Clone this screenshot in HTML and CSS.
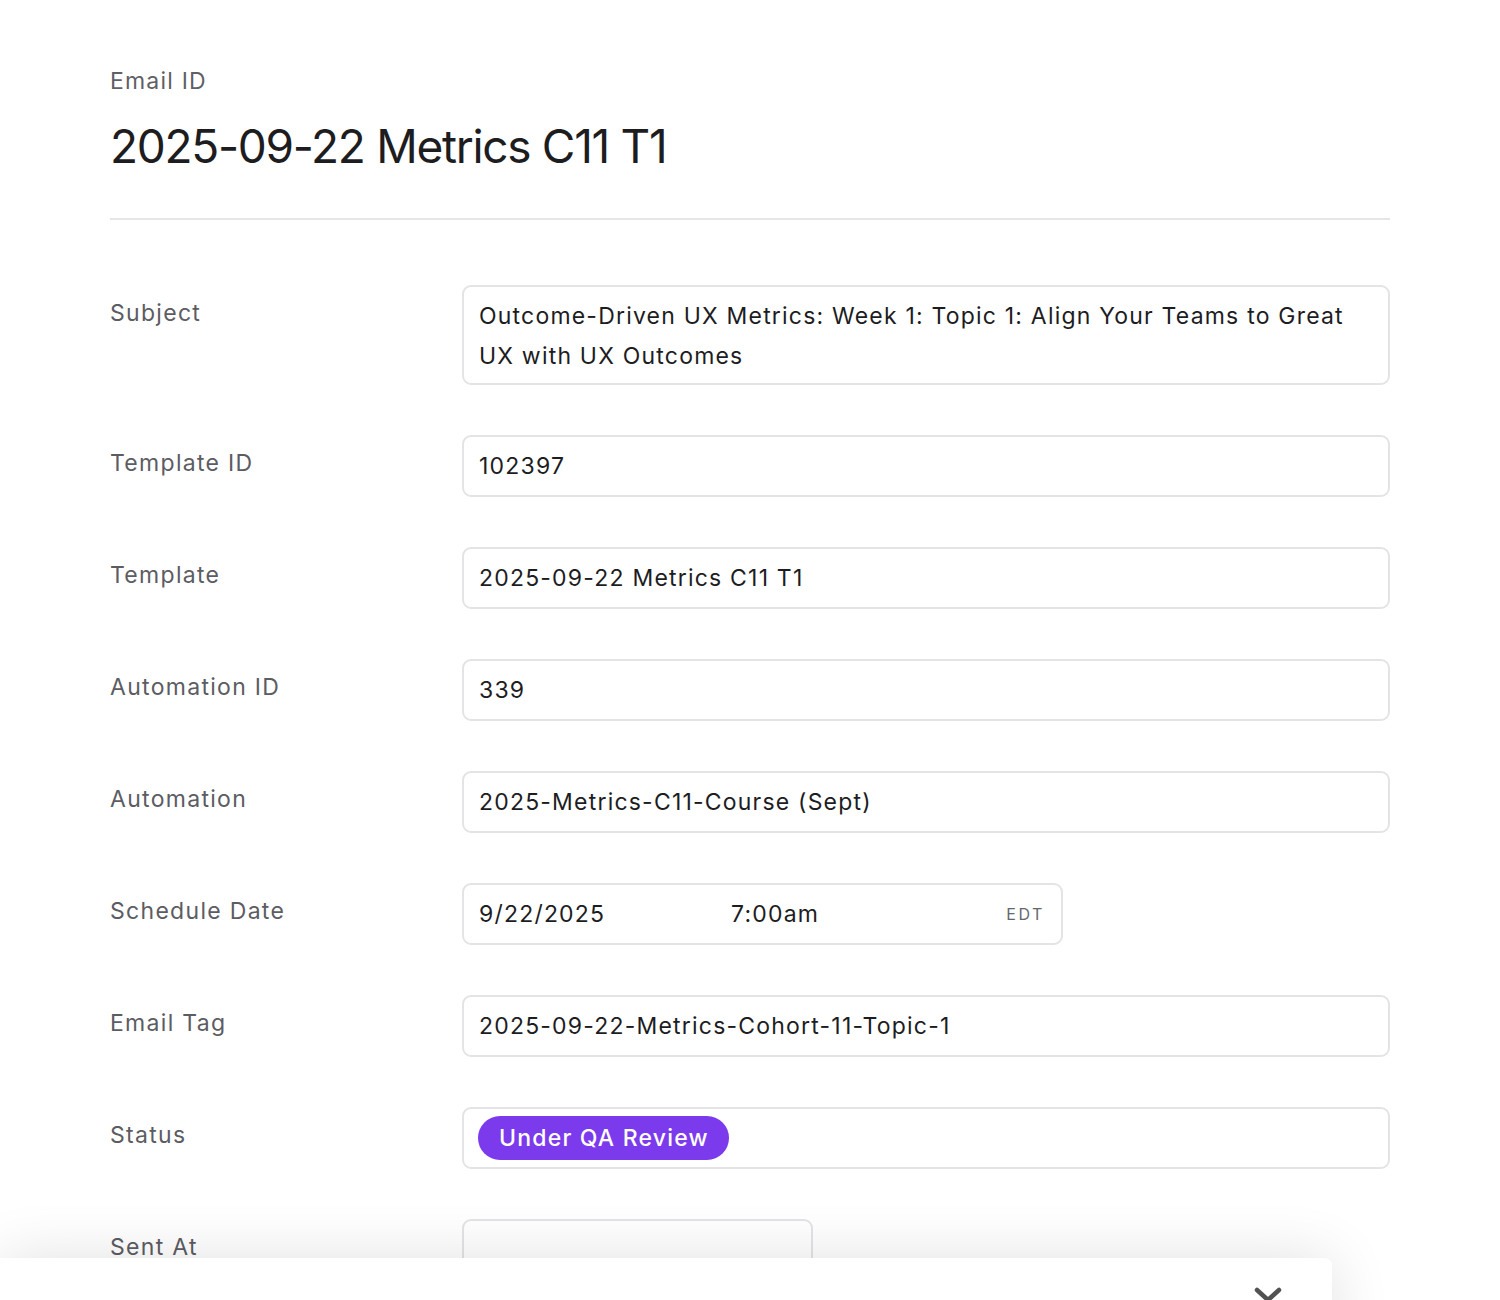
FILE: index.html
```html
<!DOCTYPE html>
<html>
<head>
<meta charset="utf-8">
<link rel="stylesheet" href="styles.css">
</head>
<body>
<main class="page">
  <header class="head">
    <div class="eyebrow">Email ID</div>
    <h1 class="title">2025-09-22 Metrics C11 T1</h1>
  </header>
  <section class="form">
    <div class="row">
      <div class="label">Subject</div>
      <div class="field multi">Outcome-Driven UX Metrics: Week 1: Topic 1: Align Your Teams to Great UX with UX Outcomes</div>
    </div>
    <div class="row">
      <div class="label">Template ID</div>
      <div class="field">102397</div>
    </div>
    <div class="row">
      <div class="label">Template</div>
      <div class="field">2025-09-22 Metrics C11 T1</div>
    </div>
    <div class="row">
      <div class="label">Automation ID</div>
      <div class="field">339</div>
    </div>
    <div class="row">
      <div class="label">Automation</div>
      <div class="field">2025-Metrics-C11-Course (Sept)</div>
    </div>
    <div class="row">
      <div class="label">Schedule Date</div>
      <div class="field date">
        <span class="d">9/22/2025</span>
        <span class="t">7:00am</span>
        <span class="tz">EDT</span>
      </div>
    </div>
    <div class="row">
      <div class="label">Email Tag</div>
      <div class="field">2025-09-22-Metrics-Cohort-11-Topic-1</div>
    </div>
    <div class="row">
      <div class="label">Status</div>
      <div class="field status"><span class="pill">Under QA Review</span></div>
    </div>
    <div class="row">
      <div class="label">Sent At</div>
      <div class="field sent"></div>
    </div>
  </section>
</main>
<div class="sheet">
  <svg class="chev" width="28" height="18" viewBox="0 0 28 18"><path d="M3 4 L14 14 L25 4" fill="none" stroke="#525252" stroke-width="4.5" stroke-linecap="round" stroke-linejoin="round"/></svg>
</div>
</body>
</html>
```
FILE: styles.css
```css
html, body {
  margin: 0;
  padding: 0;
  background: #ffffff;
  height: 1300px;
  overflow: hidden;
}
body {
  font-family: Inter, "Noto Sans", sans-serif;
  color: #1d1d1f;
}
.page {
  padding: 66px 110px 0 110px;
}
.head {
  border-bottom: 2px solid #e6e6e8;
  padding-bottom: 44px;
}
.eyebrow {
  font-size: 23px;
  line-height: 30px;
  letter-spacing: 1.2px;
  color: #5f5f66;
}
.title {
  margin: 22px 0 0 0;
  font-size: 46px;
  line-height: 56px;
  font-weight: 400;
  letter-spacing: -1.3px;
  color: #1d1d1f;
}
.form {
  padding-top: 65px;
  display: flex;
  flex-direction: column;
  gap: 50px;
}
.row {
  display: flex;
  align-items: flex-start;
}
.label {
  width: 352px;
  flex: none;
  font-size: 23px;
  line-height: 28px;
  letter-spacing: 1.3px;
  padding-top: 14px;
  color: #5c5c63;
}
.field {
  flex: 1;
  box-sizing: border-box;
  height: 62px;
  border: 2px solid #e4e4e6;
  border-radius: 9px;
  padding: 0 15px;
  display: flex;
  align-items: center;
  font-size: 23px;
  letter-spacing: 1.2px;
  color: #1d1d1f;
}
.field.multi {
  display: block;
  height: 100px;
  padding: 9px 15px;
  line-height: 40px;
}
.field.date {
  flex: none;
  width: 601px;
}
.date .d { width: 252px; }
.date .t { flex: 1; }
.date .tz {
  font-size: 16px;
  letter-spacing: 2.6px;
  color: #66666d;
  padding-right: 1px;
}
.field.status {
  padding: 0 14px;
}
.pill {
  background: #7c3aed;
  color: #ffffff;
  border-radius: 22px;
  padding: 0 20px 0 21px;
  font-size: 23px;
  line-height: 44px;
  font-weight: 500;
  letter-spacing: 1.2px;
}
.field.sent {
  flex: none;
  width: 351px;
}
.sheet {
  position: fixed;
  left: 0;
  top: 1258px;
  width: 1332px;
  height: 100px;
  background: #ffffff;
  border-top-right-radius: 8px;
  box-shadow: 0 0 60px rgba(0,0,0,0.12);
}
.chev {
  position: absolute;
  left: 1254px;
  top: 28px;
}
```
